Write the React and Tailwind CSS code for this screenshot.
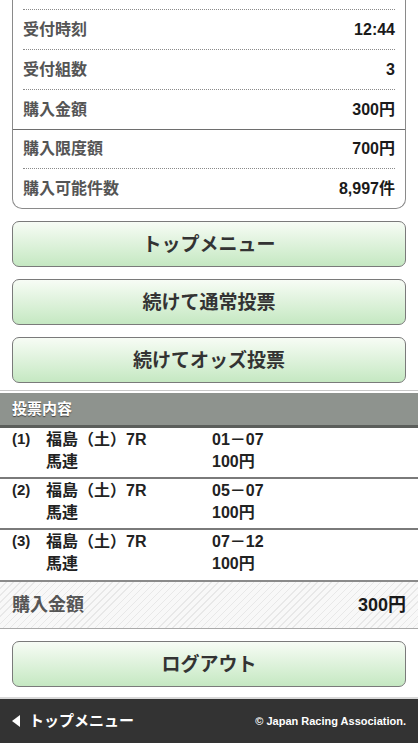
import React from "react";

const font = { fontFamily: '"Liberation Sans", "Noto Sans CJK JP", sans-serif' };

function InfoRow({ label, value, sep }) {
  if (sep === "solid") {
    return (
      <div className="h-[40px] border-b border-[#6e6e6e] px-[10px] flex items-center justify-between">
        <span className="text-[16px] font-bold text-[#555]">{label}</span>
        <span className="text-[16px] font-bold text-[#1a1a1a]">{value}</span>
      </div>
    );
  }
  return (
    <div
      className={
        "mx-[10px] flex items-center justify-between " +
        (sep === "dotted" ? "h-[39px] border-b border-dotted border-[#8a8a8a]" : "h-[39px]")
      }
    >
      <span className="text-[16px] font-bold text-[#555]">{label}</span>
      <span className="text-[16px] font-bold text-[#1a1a1a]">{value}</span>
    </div>
  );
}

function GreenButton({ children }) {
  return (
    <div className="mx-[12px] h-[46px] rounded-[7px] border border-[#7a7a7a] bg-gradient-to-b from-[#f7fcf5] to-[#c5e8c2] flex items-center justify-center">
      <span className="text-[19px] font-bold text-[#333] leading-none">{children}</span>
    </div>
  );
}

function BetRow({ n, race, kind, combo, amount, last }) {
  return (
    <div
      className={
        "px-[12px] pt-[1px] flex " +
        (last ? "pb-[5px]" : "pb-[4px] border-b-2 border-[#7a7a7a]")
      }
    >
      <div className="w-[34px] text-[15px] font-bold text-[#222] leading-[20px]">{n}</div>
      <div className="w-[166px] text-[16px] font-bold text-[#222] leading-[22px]">
        <div>{race}</div>
        <div>{kind}</div>
      </div>
      <div className="text-[16px] font-bold text-[#222] leading-[22px]">
        <div>{combo}</div>
        <div>{amount}</div>
      </div>
    </div>
  );
}

export default function App() {
  return (
    <div style={font} className="w-[418px] h-[743px] bg-white overflow-hidden flex flex-col">
      {/* Summary card */}
      <div className="mx-[12px] border-x border-b border-[#8a8a8a] rounded-b-[10px]">
        <div className="mx-[10px] h-[10px] border-b border-dotted border-[#8a8a8a]" />
        <div className="h-[40px] mx-[10px] border-b border-dotted border-[#8a8a8a] flex items-center justify-between">
          <span className="text-[16px] font-bold text-[#555]">受付時刻</span>
          <span className="text-[16px] font-bold text-[#1a1a1a]">12:44</span>
        </div>
        <div className="h-[40px] mx-[10px] border-b border-dotted border-[#8a8a8a] flex items-center justify-between">
          <span className="text-[16px] font-bold text-[#555]">受付組数</span>
          <span className="text-[16px] font-bold text-[#1a1a1a]">3</span>
        </div>
        <InfoRow label="購入金額" value="300円" sep="solid" />
        <InfoRow label="購入限度額" value="700円" sep="dotted" />
        <InfoRow label="購入可能件数" value="8,997件" />
      </div>

      <div className="mt-[12px] flex flex-col gap-[12px]">
        <GreenButton>トップメニュー</GreenButton>
        <GreenButton>続けて通常投票</GreenButton>
        <GreenButton>続けてオッズ投票</GreenButton>
      </div>

      {/* Section header */}
      <div className="mt-[7px] border-t border-[#c8c8c8] pt-[2px]">
        <div className="h-[35px] bg-[#8e938e] border-b-[3px] border-[#5b5e5b] px-[12px] flex items-center">
          <span className="text-[15px] font-bold text-white [text-shadow:0_1px_1px_#444]">投票内容</span>
        </div>
      </div>

      <BetRow n="(1)" race="福島（土）7R" kind="馬連" combo="01－07" amount="100円" />
      <BetRow n="(2)" race="福島（土）7R" kind="馬連" combo="05－07" amount="100円" />
      <BetRow n="(3)" race="福島（土）7R" kind="馬連" combo="07－12" amount="100円" last />

      {/* Total band */}
      <div className="border-t-2 border-[#8a8a8a] border-b border-b-[#aaaaaa] h-[49px] px-[12px] flex items-center justify-between bg-[repeating-linear-gradient(135deg,#f8f8f8_0px,#f8f8f8_4px,#e8e8e8_4px,#e8e8e8_5px)]">
        <span className="text-[18px] font-bold text-[#555]">購入金額</span>
        <span className="text-[18px] font-bold text-[#1a1a1a]">300円</span>
      </div>

      <div className="mt-[12px]">
        <GreenButton>ログアウト</GreenButton>
      </div>

      {/* Footer */}
      <div className="mt-[10px] border-t-2 border-[#d8d8d8] flex-1 bg-[#333333] px-[12px] flex items-center justify-between">
        <div className="flex items-center gap-[9px]">
          <svg width="8" height="12" viewBox="0 0 8 12">
            <polygon points="8,0 8,12 0,6" fill="#ffffff" />
          </svg>
          <span className="text-[15px] font-bold text-white">トップメニュー</span>
        </div>
        <span className="text-[11px] font-bold text-white">© Japan Racing Association.</span>
      </div>
    </div>
  );
}
